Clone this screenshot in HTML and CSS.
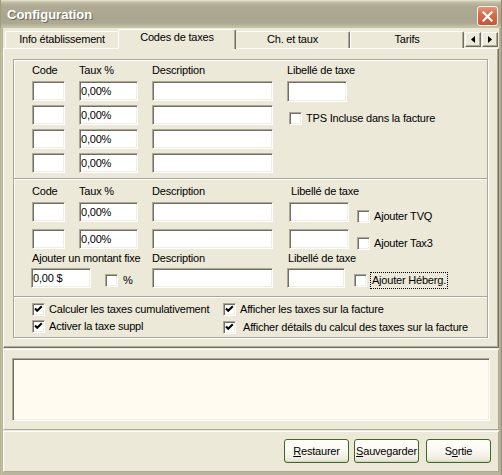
FILE: index.html
```html
<!DOCTYPE html>
<html lang="fr">
<head>
<meta charset="utf-8">
<title>Configuration</title>
<link rel="stylesheet" href="styles.css">
</head>
<body>
<div class="window">
  <div class="titlebar">
    <span class="title">Configuration</span>
    <span class="close"><svg width="11" height="11" viewBox="0 0 11 11"><path d="M1.5 1.5 L9.5 9.5 M9.5 1.5 L1.5 9.5" stroke="#fff" stroke-width="2.2" stroke-linecap="square"/></svg></span>
  </div>
  <div class="frame">
    <div class="client">
      <div class="tabstrip">
        <div class="tab tab-info">Info établissement</div>
        <div class="tab tab-active">Codes de taxes</div>
        <div class="tab tab-ch">Ch. et taux</div>
        <div class="tab tab-tarifs">Tarifs</div>
        <div class="spin">
          <span class="spinbtn"><svg width="4" height="7" viewBox="0 0 4 7"><path d="M4 0 L0 3.5 L4 7 Z" fill="#000"/></svg></span>
          <span class="spinbtn"><svg width="4" height="7" viewBox="0 0 4 7"><path d="M0 0 L4 3.5 L0 7 Z" fill="#000"/></svg></span>
        </div>
      </div>

      <div class="pane">
        <div class="group">
          <div class="sec sec1">
            <span class="lbl">Code</span>
            <span class="lbl">Taux %</span>
            <span class="lbl">Description</span>
            <div class="libcol">
              <span class="lbl">Libellé de taxe</span>
              <span class="field w-lib lib1"></span>
              <span class="chk tps"><span class="box"></span><span class="ctext">TPS Incluse dans la facture</span></span>
            </div>
            <span class="field"></span><span class="field">0,00%</span><span class="field"></span>
            <span class="field"></span><span class="field">0,00%</span><span class="field"></span>
            <span class="field"></span><span class="field">0,00%</span><span class="field"></span>
            <span class="field"></span><span class="field">0,00%</span><span class="field"></span>
          </div>

          <div class="sec sec2">
            <span class="lbl">Code</span>
            <span class="lbl">Taux %</span>
            <span class="lbl">Description</span>
            <span class="lbl lbl-lib">Libellé de taxe</span>

            <span class="field"></span><span class="field">0,00%</span><span class="field"></span>
            <div class="libcell">
              <span class="field w-lib shift"></span>
              <span class="chk"><span class="box"></span><span class="ctext">Ajouter TVQ</span></span>
            </div>

            <span class="field"></span><span class="field">0,00%</span><span class="field"></span>
            <div class="libcell">
              <span class="field w-lib shift"></span>
              <span class="chk"><span class="box"></span><span class="ctext">Ajouter Tax3</span></span>
            </div>

            <span class="lbl span2">Ajouter un montant fixe</span>
            <span class="lbl">Description</span>
            <span class="lbl lbl-lib2">Libellé de taxe</span>

            <div class="fixcell span2">
              <span class="field w-fix">0,00 $</span>
              <span class="chk pct"><span class="box"></span><span class="ctext">%</span></span>
            </div>
            <span class="field"></span>
            <div class="libcell">
              <span class="field w-lib"></span>
              <span class="chk heb"><span class="box"></span><span class="ctext focus">Ajouter Héberg.</span></span>
            </div>
          </div>

          <div class="sec sec3">
            <span class="chk"><span class="box"><svg class="tick" width="11" height="11" viewBox="0 0 11 11"><path d="M2 4.5 L4.2 6.8 L8.8 2.2" fill="none" stroke="#000" stroke-width="2"/></svg></span><span class="ctext">Calculer les taxes cumulativement</span></span>
            <span class="chk"><span class="box"><svg class="tick" width="11" height="11" viewBox="0 0 11 11"><path d="M2 4.5 L4.2 6.8 L8.8 2.2" fill="none" stroke="#000" stroke-width="2"/></svg></span><span class="ctext">Afficher les taxes sur la facture</span></span>
            <span class="chk"><span class="box"><svg class="tick" width="11" height="11" viewBox="0 0 11 11"><path d="M2 4.5 L4.2 6.8 L8.8 2.2" fill="none" stroke="#000" stroke-width="2"/></svg></span><span class="ctext">Activer la taxe suppl</span></span>
            <span class="chk low"><span class="box"><svg class="tick" width="11" height="11" viewBox="0 0 11 11"><path d="M2 4.5 L4.2 6.8 L8.8 2.2" fill="none" stroke="#000" stroke-width="2"/></svg></span><span class="ctext wide">Afficher détails du calcul des taxes sur la facture</span></span>
          </div>
        </div>
      </div>

      <div class="memopanel">
        <div class="memo"></div>
      </div>

      <div class="btnpanel">
        <button class="btn"><u>R</u>estaurer</button>
        <button class="btn btn-save"><u>S</u>auvegarder</button>
        <button class="btn btn-exit">S<u>o</u>rtie</button>
      </div>
    </div>
  </div>
</div>
</body>
</html>
```

FILE: styles.css
```css
* { box-sizing: border-box; }

html, body {
  margin: 0;
  padding: 0;
}

body {
  width: 502px;
  height: 475px;
  overflow: hidden;
  font-family: "Liberation Sans", Arial, sans-serif;
  font-size: 11px;
  letter-spacing: -0.2px;
  color: #000;
  background: #b2af95;
}

.window {
  width: 502px;
  height: 475px;
  display: flex;
  flex-direction: column;
}

/* ---------- title bar ---------- */
.titlebar {
  height: 28px;
  flex: none;
  display: flex;
  align-items: flex-start;
  justify-content: space-between;
  background: linear-gradient(to bottom,
    #eeecd9 0, #d2cfb6 1px, #bdb9a1 3px, #aeaa93 6px,
    #a9a58e 18px, #aca891 23px, #b6b49a 25px, #c4c3a4 27px);
  border-left: 1px solid #9e9b7e;
  border-right: 1px solid #8d8a70;
}

.title {
  padding: 7px 0 0 6px;
  font-size: 13px;
  font-weight: bold;
  letter-spacing: 0;
  line-height: 16px;
  color: #fff;
  text-shadow: 1px 1px 0 #6f6c57;
}

.close {
  width: 21px;
  height: 20px;
  margin: 6px 3px 0 0;
  border: 1px solid #fbf3ee;
  border-radius: 3px;
  background: linear-gradient(to bottom, #e59478 0, #d66e4e 40%, #c75536 100%);
  display: flex;
  align-items: center;
  justify-content: center;
}

/* ---------- frame & client ---------- */
.frame {
  flex: 1;
  display: flex;
  padding: 0 3px 3px 3px;
  background: linear-gradient(to right, #a7a47f 0, #c9c6a8 1px, #b8b59a 2px, #b8b59a calc(100% - 2px), #8e8b72 100%);
  border-bottom: 1px solid #7c7a62;
}

.client {
  flex: 1;
  display: flex;
  flex-direction: column;
  background: #ece9d8;
}

/* ---------- tabs ---------- */
.tabstrip {
  height: 20px;
  flex: none;
  display: flex;
  align-items: flex-end;
  padding-left: 2px;
}

.tab {
  height: 17px;
  border-top: 1px solid #fff;
  border-left: 1px solid #fff;
  border-right: 1px solid #716f64;
  box-shadow: inset -1px 0 0 #aca899;
  border-top-left-radius: 2px;
  border-top-right-radius: 2px;
  text-align: center;
  line-height: 15px;
  white-space: nowrap;
  background: #ece9d8;
}

.tab-info { width: 113px; border-right: none; box-shadow: none; }
.tab-active {
  width: 118px;
  height: 20px;
  margin-bottom: -1px;
  position: relative;
  z-index: 1;
  line-height: 14px;
}
.tab-ch { width: 114px; border-left: none; }
.tab-tarifs { width: 114px; }

.spin {
  display: flex;
  gap: 1px;
  margin-left: 1px;
  margin-bottom: 1px;
}

.spinbtn {
  width: 16px;
  height: 15px;
  display: flex;
  align-items: center;
  justify-content: center;
  background: #ece9d8;
  border-top: 1px solid #fff;
  border-left: 1px solid #fff;
  border-right: 1px solid #716f64;
  border-bottom: 1px solid #716f64;
  box-shadow: inset -1px -1px 0 #aca899;
}

/* ---------- tab pane ---------- */
.pane {
  height: 300px;
  flex: none;
  border-top: 1px solid #fff;
  border-left: 1px solid #fff;
  border-right: 1px solid #716f64;
  border-bottom: 1px solid #716f64;
  box-shadow: inset -1px -1px 0 #aca899;
  padding: 10px 0 0 9px;
}

.group {
  width: 475px;
  height: 279px;
  border: 1px solid #aca899;
  box-shadow: 1px 1px 0 #fff, inset 1px 1px 0 #fff;
  display: flex;
  flex-direction: column;
}

.sec {
  padding-left: 18px;
}

.sec + .sec {
  border-top: 1px solid #aca899;
  box-shadow: inset 0 1px 0 #fff;
}

.lbl {
  display: block;
  line-height: 13px;
  white-space: nowrap;
}

/* fields */
.field {
  display: block;
  height: 20px;
  background: #fff;
  border-top: 1px solid #aca899;
  border-left: 1px solid #aca899;
  border-right: 1px solid #fff;
  border-bottom: 1px solid #fff;
  box-shadow: inset 1px 1px 0 #716f64, inset -1px -1px 0 #f1efe2;
  padding-left: 1px;
  line-height: 18px;
  white-space: nowrap;
}

.w-lib { width: 60px; }
.w-fix { width: 60px; margin-left: -1px; }
.shift { margin-left: 2px; }

/* checkboxes */
.chk {
  display: flex;
  align-items: center;
  line-height: 13px;
  white-space: nowrap;
}

.box {
  width: 13px;
  height: 13px;
  flex: none;
  background: #fff;
  border-top: 1px solid #aca899;
  border-left: 1px solid #aca899;
  border-right: 1px solid #fff;
  border-bottom: 1px solid #fff;
  box-shadow: inset 1px 1px 0 #716f64, inset -1px -1px 0 #f1efe2;
  display: flex;
}

.tick { display: block; }

.ctext { margin-left: 4px; }

.focus {
  outline: 1px dotted #000;
  outline-offset: 0;
  padding: 1px 1px 1px 1px;
  margin-left: 4px;
}

/* section 1 */
.sec1 {
  display: grid;
  grid-template-columns: 33px 59px 121px 160px;
  grid-template-rows: 13px 20px 20px 20px 20px;
  column-gap: 14px;
  row-gap: 4px;
  align-items: start;
  padding-top: 4px;
  height: 118px;
}

.libcol {
  grid-column: 4;
  grid-row: 1 / span 5;
  display: flex;
  flex-direction: column;
  align-items: flex-start;
}

.lib1 { margin-top: 4px; height: 21px; }
.tps { margin: 10px 0 0 2px; }

/* section 2 */
.sec2 {
  display: grid;
  grid-template-columns: 33px 59px 121px 160px;
  grid-template-rows: 17px 27px 23px 16px 20px;
  column-gap: 14px;
  align-items: start;
  padding-top: 6px;
  height: 118px;
}

.span2 { grid-column: 1 / span 2; }

.lbl-lib { margin-left: 4px; }
.lbl-lib2 { margin-left: 1px; }

.libcell {
  display: flex;
  align-items: flex-end;
  height: 20px;
}

.libcell .chk { margin-left: 8px; margin-bottom: -1px; }
.libcell .heb { margin-left: 9px; margin-bottom: 0; }
.heb .ctext.focus { margin-left: 4px; }

.fixcell {
  display: flex;
  align-items: center;
  height: 20px;
}

.pct { margin-left: 14px; margin-top: 4px; }
.pct .ctext { margin-left: 5px; }

/* section 3 */
.sec3 {
  display: grid;
  grid-template-columns: 191px auto;
  grid-template-rows: 13px 13px;
  row-gap: 4px;
  padding-top: 6px;
  height: 41px;
}

.low { margin-top: 1px; }
.wide { margin-left: 7px; }

/* ---------- memo panel ---------- */
.memopanel {
  height: 81px;
  flex: none;
  margin-top: 1px;
  border-top: 1px solid #fff;
  border-left: 1px solid #fff;
  border-right: 1px solid #aca899;
  border-bottom: 1px solid #aca899;
  padding: 8px;
}

.memo {
  height: 63px;
  background: #fffbf0;
  border-top: 1px solid #aca899;
  border-left: 1px solid #aca899;
  border-right: 1px solid #fff;
  border-bottom: 1px solid #fff;
  box-shadow: inset 1px 1px 0 #716f64, inset -1px -1px 0 #f1efe2;
}

/* ---------- buttons ---------- */
.btnpanel {
  height: 41px;
  flex: none;
  margin-top: 1px;
  border-top: 1px solid #fff;
  border-left: 1px solid #fff;
  border-right: 1px solid #aca899;
  border-bottom: 1px solid #aca899;
  display: flex;
  justify-content: flex-end;
  align-items: flex-start;
  padding: 7px 7px 0 0;
}

.btn {
  width: 65px;
  height: 24px;
  padding: 0;
  font-family: "Liberation Sans", Arial, sans-serif;
  font-size: 11px;
  letter-spacing: -0.2px;
  color: #000;
  border: 1px solid #3f6a22;
  border-radius: 3px;
  background: linear-gradient(to bottom, #fffffb 0, #fbfaf3 45%, #f1efe4 80%, #e2dfcf 100%);
  box-shadow: inset 0 -1px 0 #d8d5c2;
}

.btn u { text-decoration: underline; text-underline-offset: 1px; }

.btn-save { margin-left: 5px; }
.btn-exit { margin-left: 7px; }
```
